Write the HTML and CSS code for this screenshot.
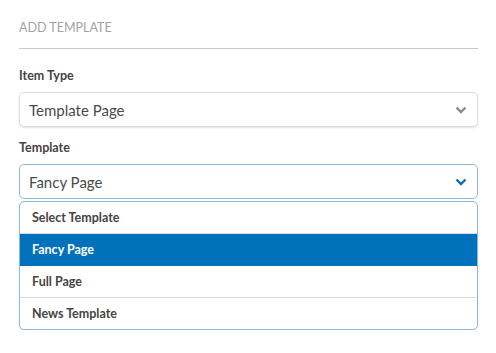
FILE: index.html
```html
<!DOCTYPE html>
<html>
	<head>
		<meta charset="utf-8">
		<link rel="stylesheet" href="styles.css">
	</head>
	<body>
		<div class="tpl-panel">
			<h3 class="tpl-title">ADD TEMPLATE</h3>

			<label class="tpl-label">Item Type</label>
			<div class="tpl-select">
				<span class="tpl-select-value">Template Page</span>
				<svg class="tpl-chevron" width="12" height="8" viewBox="0 0 12 8"><path d="M1.5 1.5 L6 6 L10.5 1.5" fill="none" stroke="#8a8a8a" stroke-width="2.4"/></svg>
			</div>

			<label class="tpl-label">Template</label>
			<div class="tpl-select tpl-select-open">
				<span class="tpl-select-value">Fancy Page</span>
				<svg class="tpl-chevron" width="12" height="8" viewBox="0 0 12 8"><path d="M1.5 1.5 L6 6 L10.5 1.5" fill="none" stroke="#0d6eb3" stroke-width="2.4"/></svg>
			</div>
			<ul class="tpl-options">
				<li>Select Template</li>
				<li class="active">Fancy Page</li>
				<li>Full Page</li>
				<li>News Template</li>
			</ul>
		</div>
	</body>
</html>
```

FILE: styles.css
```css
body{
	margin: 0;
	background: #ffffff;
	font-family: Lato, "Open Sans", sans-serif;
}
.tpl-panel{
	padding: 20px 18px 0 19px;
}
.tpl-title{
	margin: 0 0 19px;
	padding-bottom: 12px;
	font-size: 12.5px;
	line-height: 16px;
	font-weight: 400;
	color: #a2a2a2;
	border-bottom: 1px solid #c8c8c8;
}
.tpl-label{
	display: block;
	font-size: 12.5px;
	line-height: 16px;
	font-weight: 700;
	color: #444444;
	margin-bottom: 8px;
}
.tpl-select{
	display: flex;
	align-items: center;
	justify-content: space-between;
	height: 33px;
	padding: 0 10px 0 9px;
	border: 1px solid #dcdcdc;
	border-radius: 5px;
	box-shadow: 0 1px 2px rgba(0, 0, 0, 0.12);
	margin-bottom: 13px;
}
.tpl-select-value{
	font-size: 15px;
	color: #4a4a4a;
}
.tpl-select-open{
	border-color: #8db9d8;
	box-shadow: none;
	margin-bottom: 2px;
}
.tpl-options{
	list-style: none;
	margin: 0;
	padding: 0;
	border: 1px solid #8db9d8;
	border-radius: 5px;
	overflow: hidden;
	box-shadow: 0 1px 2px rgba(0, 0, 0, 0.1);
}
.tpl-options li{
	height: 31px;
	line-height: 31px;
	padding-left: 12px;
	font-size: 12.5px;
	font-weight: 700;
	color: #444444;
	border-bottom: 1px solid #d8dde2;
}
.tpl-options li:last-child{
	border-bottom: none;
}
.tpl-options li.active{
	background: #0071bb;
	color: #ffffff;
	border-bottom-color: #0071bb;
}
```
